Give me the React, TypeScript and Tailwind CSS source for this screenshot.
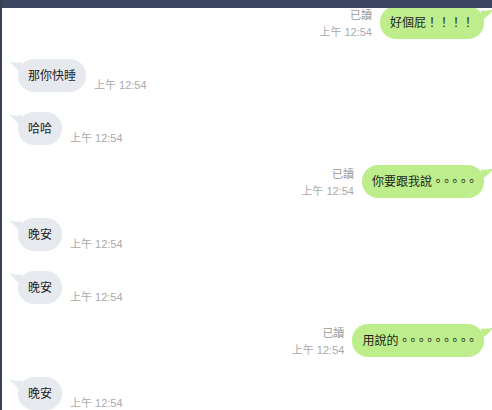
import React from "react";

type Msg = { me: boolean; text: string; dots?: string };

const messages: Msg[] = [
  { me: true, text: "好個屁！！！！" },
  { me: false, text: "那你快睡" },
  { me: false, text: "哈哈" },
  { me: true, text: "你要跟我說", dots: "。。。。。" },
  { me: false, text: "晚安" },
  { me: false, text: "晚安" },
  { me: true, text: "用說的", dots: "。。。。。。。。。" },
  { me: false, text: "晚安" },
];

const font = { fontFamily: '"Liberation Sans", "Noto Sans CJK TC", sans-serif' };

function LeftTail() {
  return (
    <svg
      className="absolute left-[-9px] top-[2px]"
      width="13"
      height="13"
      viewBox="0 0 12 12"
    >
      <path d="M12 1 C8 2 4 1.5 0 0 C3 3 6 7 11 11 Z" fill="#e6e9ed" />
    </svg>
  );
}

function RightTail() {
  return (
    <svg
      className="absolute right-[-10px] top-[1px]"
      width="13"
      height="13"
      viewBox="0 0 12 12"
    >
      <path d="M0 3 C4 4 8 3.5 12 2 C9 5 6 9 1 12 Z" fill="#bdee8b" />
    </svg>
  );
}

function Bubble({ msg }: { msg: Msg }) {
  return (
    <div
      className={
        msg.me
          ? "relative h-[33px] flex items-center rounded-[16px] bg-[#bdee8b] px-[10px] text-[12px] text-[#1e1e1e]"
          : "relative h-[33px] flex items-center rounded-[16px] bg-[#e6e9ed] px-[10px] text-[12px] text-[#1e1e1e]"
      }
    >
      {msg.me ? <RightTail /> : <LeftTail />}
      <span>
        {msg.text}
        {msg.dots && <span className="tracking-[-3.6px]">{msg.dots}</span>}
      </span>
    </div>
  );
}

export default function App() {
  return (
    <div
      className="w-[492px] h-[410px] overflow-hidden bg-white border-l-2 border-[#38414f] flex flex-col"
      style={font}
    >
      <div className="relative z-10 h-[8px] shrink-0 bg-[#3c4661]"></div>
      <div className="flex flex-col gap-[20px] mt-[-2px]">
        {messages.map((msg, index) =>
          msg.me ? (
            <div key={index} className="flex flex-row justify-end items-end pr-[8px]">
              <div className="flex flex-col items-end mr-[8px] mb-0 gap-[3px] text-[11px] leading-[14px]">
                <span className="text-[#9a9a9a]">已讀</span>
                <span className="text-[#aaaaaa]">上午 12:54</span>
              </div>
              <Bubble msg={msg} />
            </div>
          ) : (
            <div key={index} className="flex flex-row items-end pl-[16px]">
              <Bubble msg={msg} />
              <span className="ml-[8px] mb-0 text-[11px] leading-[14px] text-[#aaaaaa]">
                上午 12:54
              </span>
            </div>
          )
        )}
      </div>
    </div>
  );
}
